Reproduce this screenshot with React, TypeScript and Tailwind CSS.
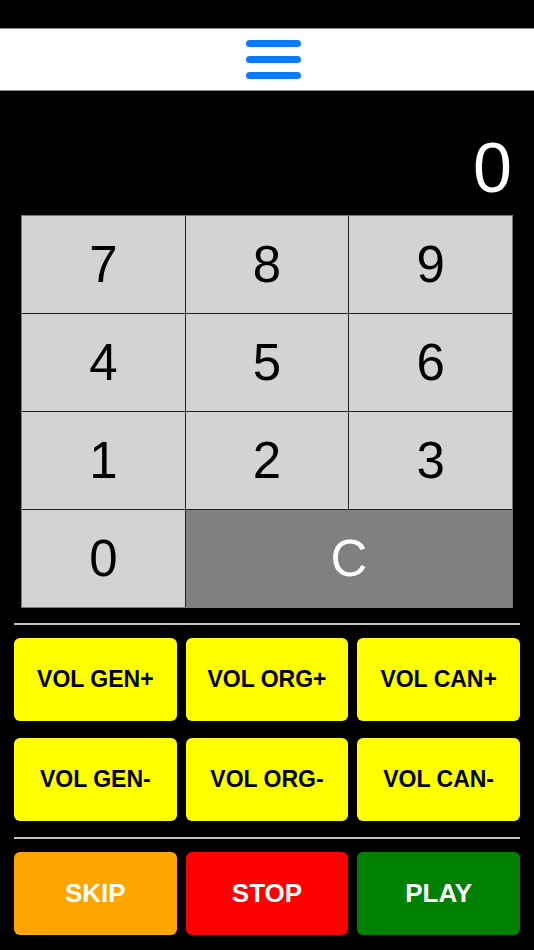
import React, { useState } from "react";

const keys = ["7", "8", "9", "4", "5", "6", "1", "2", "3"];

const volButtons = [
  ["VOL GEN+", "VOL ORG+", "VOL CAN+"],
  ["VOL GEN-", "VOL ORG-", "VOL CAN-"],
];

const App = () => {
  const [value, setValue] = useState("0");

  const press = (k: string) => {
    setValue((v) => (v === "0" ? k : (v + k).slice(0, 6)));
  };

  return (
    <div
      className="min-h-[950px] w-full bg-black"
      style={{ fontFamily: '"Liberation Sans", Arial, sans-serif' }}
    >
      {/* status bar */}
      <div className="h-[28px] bg-black" />

      {/* header */}
      <div className="flex h-[63px] items-center justify-center border-y border-[#8e8e8e] bg-white pl-[13px]">
        <button className="flex w-[55px] flex-col gap-[9px]">
          <span className="block h-[7px] w-full rounded-full bg-[#0a7aff]" />
          <span className="block h-[7px] w-full rounded-full bg-[#0a7aff]" />
          <span className="block h-[7px] w-full rounded-full bg-[#0a7aff]" />
        </button>
      </div>

      {/* display */}
      <div className="h-[124px] pt-[42px] pr-[22px] text-right text-[70px] leading-none text-white">
        {value}
      </div>

      {/* keypad */}
      <div className="mx-[21px] grid h-[393px] grid-cols-3 grid-rows-4 gap-px border border-[#7a7a7a] bg-[#222]">
        {keys.map((k) => (
          <button
            key={k}
            onClick={() => press(k)}
            className="flex items-center justify-center bg-[#d3d3d3] text-[51px] leading-none text-black"
          >
            {k}
          </button>
        ))}
        <button
          onClick={() => press("0")}
          className="flex items-center justify-center bg-[#d3d3d3] text-[51px] leading-none text-black"
        >
          0
        </button>
        <button
          onClick={() => setValue("0")}
          className="col-span-2 flex items-center justify-center bg-[#808080] text-[51px] leading-none text-white"
        >
          C
        </button>
      </div>

      <div className="mx-[14px] mt-[15px] h-[2px] bg-[#c4c4c4]" />

      {/* volume controls */}
      <div className="mx-[14px] mt-[13px] flex flex-col gap-[17px]">
        {volButtons.map((row, i) => (
          <div key={i} className="grid grid-cols-3 gap-[9px]">
            {row.map((label) => (
              <button
                key={label}
                className="flex h-[83px] items-center justify-center rounded-[6px] bg-[#ffff00] text-[23px] font-bold text-black"
              >
                {label}
              </button>
            ))}
          </div>
        ))}
      </div>

      <div className="mx-[14px] mt-[16px] h-[2px] bg-[#c4c4c4]" />

      {/* transport */}
      <div className="mx-[14px] mt-[13px] grid grid-cols-3 gap-[9px]">
        <button className="flex h-[83px] items-center justify-center rounded-[6px] bg-[#ffa500] text-[26px] font-bold text-white">
          SKIP
        </button>
        <button className="flex h-[83px] items-center justify-center rounded-[6px] bg-[#ff0000] text-[26px] font-bold text-white">
          STOP
        </button>
        <button className="flex h-[83px] items-center justify-center rounded-[6px] bg-[#008000] text-[26px] font-bold text-white">
          PLAY
        </button>
      </div>
    </div>
  );
};

export default App;
